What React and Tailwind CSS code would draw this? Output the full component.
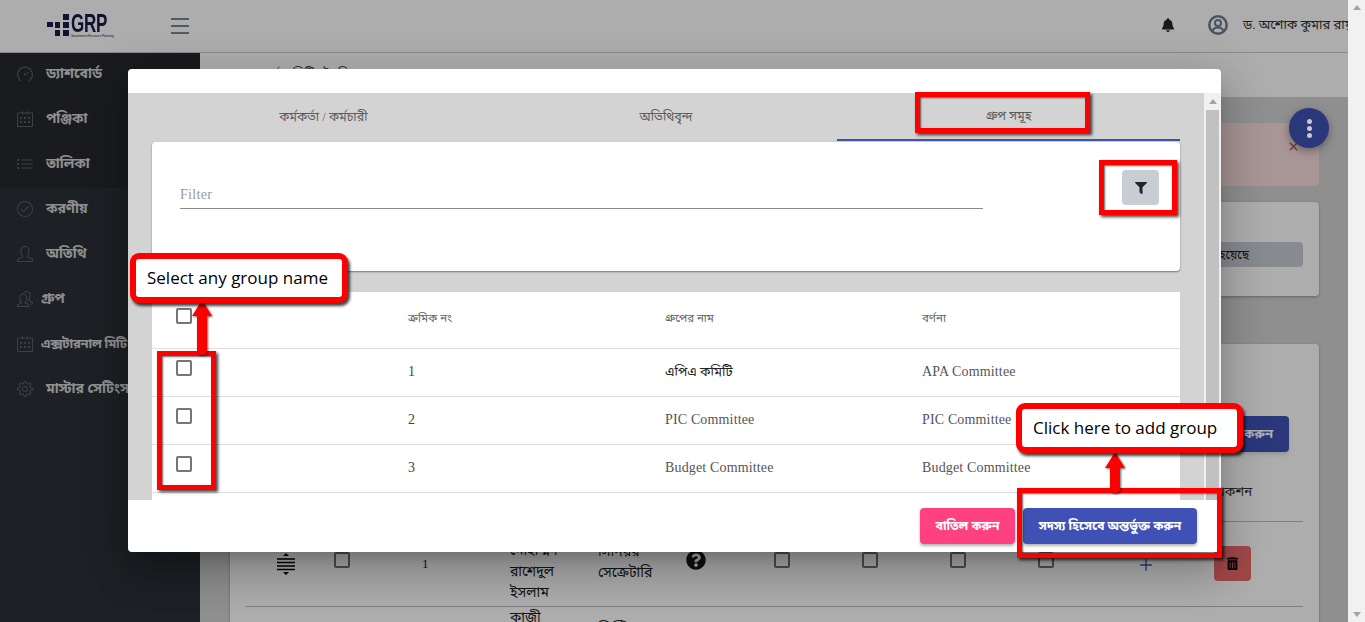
import { FaBell, FaFilter, FaQuestionCircle, FaTrashAlt } from 'react-icons/fa'
import { SlSpeedometer, SlCalender, SlList, SlCheck, SlUser, SlPeople, SlSettings } from 'react-icons/sl'
import { Plus, X } from 'lucide-react'

const sideTop = [
  { label: 'ড্যাশবোর্ড', icon: SlSpeedometer },
  { label: 'পঞ্জিকা', icon: SlCalender },
  { label: 'তালিকা', icon: SlList },
]

const sideRest = [
  { label: 'করণীয়', icon: SlCheck },
  { label: 'অতিথি', icon: SlUser },
  { label: 'গ্রুপ', icon: SlPeople, tight: true },
  { label: 'এক্সটারনাল মিটিং', icon: SlCalender, tight: true, narrow: true },
  { label: 'মাস্টার সেটিংস', icon: SlSettings },
]

const groups = [
  { no: 1, name: 'এপিএ কমিটি', desc: 'APA Committee' },
  { no: 2, name: 'PIC Committee', desc: 'PIC Committee' },
  { no: 3, name: 'Budget Committee', desc: 'Budget Committee' },
]

const bodyFont = "font-['Liberation_Serif','Noto_Sans_Bengali','Noto_Sans','DejaVu_Sans',serif]"

function SideItem({ item }) {
  const Icon = item.icon
  return (
    <div className="flex h-[45px] items-center whitespace-nowrap pb-[4px] pl-[17px]">
      <Icon className="shrink-0 text-[16px] text-[#5a6065]" />
      <span
        className={`font-bold text-[#d5d5d5] ${item.tight ? 'ml-[8px]' : 'ml-[13px]'} ${item.narrow ? 'text-[13px] tracking-[-0.3px]' : 'text-[14px]'}`}
      >
        {item.label}
      </span>
    </div>
  )
}

function Box({ className = '' }) {
  return <span className={`block h-[16px] w-[16px] rounded-[2px] border-2 border-[#757575] ${className}`} />
}

function Logo() {
  return (
    <div className="flex items-start">
      <svg width="22" height="22" viewBox="0 0 22 22" className="shrink-0">
        <g fill="#1a1a4b">
          <rect x="0" y="8" width="6" height="5" />
          <rect x="8" y="8" width="5" height="6" />
          <rect x="16" y="0" width="6" height="6" />
          <rect x="16" y="8" width="6" height="6" />
          <rect x="8" y="16" width="5" height="6" />
          <rect x="16" y="16" width="6" height="6" />
        </g>
      </svg>
      <div className="ml-[2px] flex flex-col">
        <span className="origin-top scale-y-[1.5] font-['Liberation_Sans',sans-serif] text-[17px] font-bold leading-[13px] tracking-[-0.2px] text-[#1a1a4b]">GRP</span>
        <span className="mt-[8px] whitespace-nowrap font-['Liberation_Sans',sans-serif] text-[3px] leading-[3px] text-[#1a1a4b]">Government Resource Planning</span>
      </div>
    </div>
  )
}

function UserRing() {
  return (
    <svg width="20" height="20" viewBox="0 0 20 20" fill="none" stroke="#6a7c8e" className="ml-[33px] shrink-0">
      <circle cx="10" cy="10" r="8.700" strokeWidth="2.500" />
      <circle cx="10" cy="8" r="3" strokeWidth="2" />
      <path d="M4.500 16c1-2.600 3-3.500 5.500-3.500s4.500.9 5.500 3.500" strokeWidth="2" />
    </svg>
  )
}

function Page() {
  return (
    <div className={`flex h-[622px] min-w-0 flex-1 flex-col overflow-hidden bg-white ${bodyFont}`}>
      <header className="flex h-[53px] shrink-0 items-center border-b border-[#ccc] bg-white pl-[47px] shadow-[0_2px_4px_rgba(0,0,0,.15)]">
        <Logo />
        <div className="ml-[57px] flex w-[18px] flex-col gap-[5px]">
          <span className="h-[2px] bg-[#7c848c]" />
          <span className="h-[2px] bg-[#7c848c]" />
          <span className="h-[2px] bg-[#7c848c]" />
        </div>
        <div className="ml-auto flex items-center overflow-hidden whitespace-nowrap pb-[2px]">
          <FaBell className="text-[14px] text-[#212529]" />
          <UserRing />
          <span className="ml-[15px] w-[105px] text-[13px] text-[#333]">ড. অশোক কুমার রায়</span>
        </div>
      </header>

      <div className="flex min-h-0 flex-1">
        <aside className="flex w-[200px] shrink-0 flex-col bg-[#2b3035]">
          <div className="bg-[#25292e]">
            {sideTop.map((item) => (
              <SideItem key={item.label} item={item} />
            ))}
          </div>
          {sideRest.map((item) => (
            <SideItem key={item.label} item={item} />
          ))}
        </aside>

        <main className="min-w-0 flex-1 overflow-hidden bg-[#d3d3d3]">
          <div className="flex h-[44px] items-center bg-white pb-[3px] pl-[32px] text-[13px] text-[#2aa5b8]">
            ড্যাশবোর্ড <span className="ml-1 text-[#444]">/ মিটিং তৈরি</span>
          </div>

          <div className="flex flex-col pl-[30px] pr-[29px] pt-[26px]">
            <div className="relative h-[63px] rounded-[4px] bg-[#f8dcdc]">
              <X size={13} strokeWidth={2.5} className="absolute right-[19px] top-[17px] text-[#a85a5a]" />
            </div>

            <div className="mt-[16px] flex h-[94px] items-center rounded-[4px] bg-white px-[16px] shadow-[0_1px_3px_rgba(0,0,0,.3)]">
              <div className="mt-[11px] flex h-[25px] w-full items-center justify-end rounded-[4px] bg-[#c8ccd3] pr-[54px] text-[12px] text-[#222]">
                এই মিটিংয়ের আলোচনা সম্পন্ন হয়েছে
              </div>
            </div>

            <div className="mt-[48px] h-[400px] rounded-[4px] bg-white px-[16px] shadow-[0_1px_3px_rgba(0,0,0,.3)]">
              <div className="flex justify-end pr-[14px] pt-[72px]">
                <div className="flex h-[36px] w-[160px] items-center justify-end rounded-[4px] bg-[#3f51b5] pr-[16px] text-[13px] font-bold text-white shadow-md">করুন</div>
              </div>
              <div className="flex h-[70px] items-center justify-end border-b border-[#bbb] pr-[51px] pt-[10px] text-[13px] text-[#333]">অ্যাকশন</div>

              <div className="grid h-[85px] grid-cols-[repeat(11,88px)_1fr] items-start border-b border-[#bbb] text-[14px] leading-[21px] text-[#222]">
                <div className="flex h-full items-center pl-[30px]">
                  <svg width="20" height="22" viewBox="0 0 20 22" className="text-black">
                    <path d="M10 0l3 3H7zM10 22l-3-3h6z" fill="currentColor" />
                    <path d="M1 6h18M1 9.500h18M1 13h18M1 16.500h18" stroke="currentColor" strokeWidth="1.500" />
                  </svg>
                </div>
                <div className="pt-[30px]"><Box /></div>
                <div className="pt-[31px] text-[13px]">1</div>
                <div className="pr-[20px] pt-[18px]">মোহাম্মদ রাশেদুল ইসলাম</div>
                <div className="pr-[20px] pt-[19px]">সিনিয়র সেক্রেটারি</div>
                <div className="pt-[28px]"><FaQuestionCircle className="text-[20px] text-[#1a1a1a]" /></div>
                <div className="pt-[30px]"><Box /></div>
                <div className="pt-[30px]"><Box /></div>
                <div className="pt-[30px]"><Box /></div>
                <div className="pt-[30px]"><Box /></div>
                <div className="pl-[11px] pt-[34px]"><Plus size={18} strokeWidth={1.8} className="text-[#3f51b5]" /></div>
                <div className="pt-[24px]">
                  <div className="flex h-[35px] w-[37px] items-center justify-center rounded-[4px] bg-[#ec6a6a] text-[13px] text-black">
                    <FaTrashAlt />
                  </div>
                </div>
              </div>

              <div className="grid grid-cols-[repeat(11,88px)_1fr] text-[14px] leading-[21px] text-[#222]">
                <div className="col-start-4">কাজী</div>
                <div className="pt-[11px]">ডিপ্টি</div>
              </div>
            </div>
          </div>
        </main>
      </div>
    </div>
  )
}

function Modal() {
  return (
    <div className={`absolute left-[128px] top-[69px] flex h-[483px] w-[1093px] flex-col overflow-hidden rounded-[4px] bg-white shadow-[0_11px_15px_-7px_rgba(0,0,0,.2),0_24px_38px_3px_rgba(0,0,0,.14),0_9px_46px_8px_rgba(0,0,0,.12)] ${bodyFont}`}>
      <div className="h-[24px] shrink-0" />
      <div className="flex h-[407px] shrink-0">
        <div className="min-w-0 flex-1 overflow-hidden bg-[#d3d3d3] px-[24px]">
          <div className="mb-[1px] grid h-[48px] grid-cols-3 text-[12.5px] text-[#5c5c5c]">
            <div className="flex items-center justify-center">কর্মকর্তা / কর্মচারী</div>
            <div className="flex items-center justify-center">অতিথিবৃন্দ</div>
            <div className="flex items-center justify-center border-b-2 border-[#3f51b5]">গ্রুপ সমূহ</div>
          </div>

          <div className="flex h-[129px] items-start rounded-[4px] bg-white pl-[28px] pr-[21px] pt-[28px] shadow-[0_1px_2px_rgba(0,0,0,.45)]">
            <div className="mt-[14px] h-[25px] w-[803px] border-b border-[#8a8a8a] text-[14px] tracking-[0.3px] text-[#9a9a9a]">Filter</div>
            <button className="ml-auto flex h-[35px] w-[37px] items-center justify-center rounded-[4px] bg-[#c8ccd3] text-[12px] text-[#212529]">
              <FaFilter />
            </button>
          </div>

          <div className="mt-[21px] bg-white text-[14px] tracking-[0.15px] text-[#555]">
            <div className="grid h-[57px] grid-cols-[256px_257px_257px_1fr] items-center border-b border-[#dedede] text-[11.5px] tracking-normal text-[#666]">
              <div className="pl-[24px]"><Box className="mb-[9px]" /></div>
              <div className="mb-[2px]">ক্রমিক নং</div>
              <div className="mb-[2px]">গ্রুপের নাম</div>
              <div className="mb-[2px]">বর্ণনা</div>
            </div>
            {groups.map((g) => (
              <div key={g.no} className="grid h-[48px] grid-cols-[256px_257px_257px_1fr] items-center border-b border-[#dedede]">
                <div className="pl-[24px]"><Box className="mb-[9px]" /></div>
                <div className="mb-[2px] text-[14px] text-[#444]">{g.no}</div>
                <div className={g.no === 1 ? 'mb-[2px] text-[13px] tracking-normal text-[#222]' : 'mb-[2px]'}>{g.name}</div>
                <div className="mb-[2px]">{g.desc}</div>
              </div>
            ))}
            <div className="h-[20px]" />
          </div>
        </div>

        <div className="flex w-[17px] shrink-0 flex-col items-center bg-[#f1f1f1]">
          <span className="mt-[6px] h-0 w-0 border-x-[4px] border-b-[5px] border-x-transparent border-b-[#a3a3a3]" />
          <span className="mt-[6px] w-[13px] flex-1 bg-[#c1c1c1]" />
        </div>
      </div>

      <div className="flex flex-1 items-center justify-end pr-[24px]">
        <button className="h-[36px] w-[95px] rounded-[4px] bg-[#ff4081] text-[12.5px] font-bold text-white shadow-[0_2px_3px_rgba(0,0,0,.3)]">বাতিল করুন</button>
        <button className="ml-[8px] h-[36px] w-[174px] rounded-[4px] bg-[#3f51b5] text-[12.5px] font-bold text-white shadow-[0_2px_3px_rgba(0,0,0,.3)]">সদস্য হিসেবে অন্তর্ভুক্ত করুন</button>
      </div>
    </div>
  )
}

function Mark({ className }) {
  return <div className={`absolute border-[5px] border-[#ff0000] shadow-[2px_2px_3px_rgba(0,0,0,.75),inset_1px_1px_2px_rgba(0,0,0,.6)] ${className}`} />
}

function Callout({ className, children }) {
  return (
    <div className={`absolute flex items-center rounded-[9px] border-[6px] border-[#ff0000] bg-white font-['Open_Sans',sans-serif] text-[17px] text-black shadow-[2px_3px_3px_rgba(0,0,0,.75)] ${className}`}>
      {children}
    </div>
  )
}

function Arrow({ className, height }) {
  return (
    <svg width="24" height={height} viewBox={`0 0 24 ${height}`} className={`absolute ${className}`}>
      <path
        d={`M12 1L22 17H17L17 ${height - 6}Q17 ${height - 2} 12 ${height - 2}Q7 ${height - 2} 7 ${height - 6}L7 17H2Z`}
        fill="#ff0000"
        style={{ filter: 'drop-shadow(1px 1px 1px rgba(0,0,0,.6))' }}
      />
    </svg>
  )
}

export default function App() {
  return (
    <div className="relative flex h-[622px] w-full overflow-hidden bg-[#f1f1f1]">
      <Page />
      <div className="flex w-[17px] shrink-0 flex-col items-center justify-between bg-[#f1f1f1] py-[5px]">
        <span className="h-0 w-0 border-x-[4px] border-b-[5px] border-x-transparent border-b-[#a3a3a3]" />
        <span className="h-0 w-0 border-x-[4px] border-t-[5px] border-x-transparent border-t-[#a3a3a3]" />
      </div>

      {/* dim layer behind the dialog */}
      <div className="absolute bottom-0 left-0 right-[17px] top-0 bg-black/32" />

      {/* fab sits over the dim layer */}
      <div className="absolute left-[1289px] top-[108px] flex h-[40px] w-[40px] flex-col items-center justify-center gap-[2px] rounded-full bg-[#2b377b] shadow-[0_3px_8px_rgba(0,0,0,.35)]">
        <span className="h-[5px] w-[5px] rounded-full bg-[#c9c9c9]" />
        <span className="h-[5px] w-[5px] rounded-full bg-[#c9c9c9]" />
        <span className="h-[5px] w-[5px] rounded-full bg-[#c9c9c9]" />
      </div>

      <Modal />

      <Mark className="left-[915px] top-[92px] h-[41px] w-[175px]" />
      <Mark className="left-[1099px] top-[160px] h-[55px] w-[78px]" />
      <Mark className="left-[157px] top-[351px] h-[139px] w-[59px]" />
      <Mark className="left-[1017px] top-[488px] h-[70px] w-[205px]" />

      <Arrow className="left-[190px] top-[299px]" height={58} />
      <Arrow className="left-[1103px] top-[451px]" height={44} />

      <Callout className="left-[130px] top-[253px] h-[50px] w-[218px] pl-[11px]">Select any group name</Callout>
      <Callout className="left-[1016px] top-[403px] h-[50px] w-[227px] pl-[11px]">Click here to add group</Callout>
    </div>
  )
}
